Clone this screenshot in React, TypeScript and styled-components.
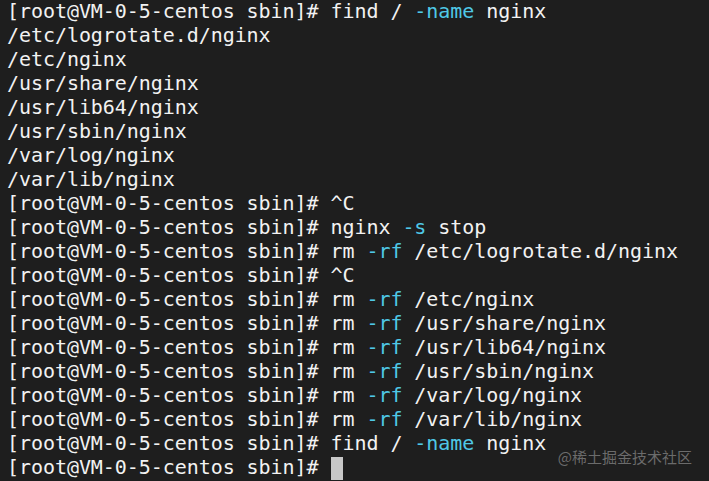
import React from "react";
import styled, { createGlobalStyle } from "styled-components";

const Global = createGlobalStyle`
  html, body { margin: 0; padding: 0; background: #1e1e1e; }
`;

const Terminal = styled.div`
  position: relative;
  width: 709px;
  height: 481px;
  overflow: hidden;
  background: #1e1e1e;
  color: #f2f2f2;
  font-family: "DejaVu Sans Mono", "Liberation Mono", monospace;
  font-size: 20px;
  letter-spacing: -0.06px;
  line-height: 24px;
  padding: 0 0 0 7px;
  box-sizing: border-box;
  white-space: pre;
`;

const Line = styled.div`
  height: 24px;
  display: flex;
  align-items: center;
  margin-top: -1px;
  margin-bottom: 1px;
`;

const Flag = styled.span`
  color: #4fc8e6;
`;

const Cursor = styled.span`
  display: inline-block;
  width: 12px;
  height: 23px;
  background: #c8c8c8;
  margin-top: 2px;
`;

const Watermark = styled.div`
  position: absolute;
  right: 17px;
  bottom: 14px;
  font-family: "Noto Sans CJK SC", "Noto Sans", sans-serif;
  font-size: 15px;
  line-height: 20px;
  letter-spacing: 0;
  color: rgba(160, 160, 160, 0.6);
  white-space: nowrap;
`;

const P = "[root@VM-0-5-centos sbin]# ";

type Seg = { t: string; flag?: boolean };
const lines: Seg[][] = [
  [{ t: P + "find / " }, { t: "-name", flag: true }, { t: " nginx" }],
  [{ t: "/etc/logrotate.d/nginx" }],
  [{ t: "/etc/nginx" }],
  [{ t: "/usr/share/nginx" }],
  [{ t: "/usr/lib64/nginx" }],
  [{ t: "/usr/sbin/nginx" }],
  [{ t: "/var/log/nginx" }],
  [{ t: "/var/lib/nginx" }],
  [{ t: P + "^C" }],
  [{ t: P + "nginx " }, { t: "-s", flag: true }, { t: " stop" }],
  [{ t: P + "rm " }, { t: "-rf", flag: true }, { t: " /etc/logrotate.d/nginx" }],
  [{ t: P + "^C" }],
  [{ t: P + "rm " }, { t: "-rf", flag: true }, { t: " /etc/nginx" }],
  [{ t: P + "rm " }, { t: "-rf", flag: true }, { t: " /usr/share/nginx" }],
  [{ t: P + "rm " }, { t: "-rf", flag: true }, { t: " /usr/lib64/nginx" }],
  [{ t: P + "rm " }, { t: "-rf", flag: true }, { t: " /usr/sbin/nginx" }],
  [{ t: P + "rm " }, { t: "-rf", flag: true }, { t: " /var/log/nginx" }],
  [{ t: P + "rm " }, { t: "-rf", flag: true }, { t: " /var/lib/nginx" }],
  [{ t: P + "find / " }, { t: "-name", flag: true }, { t: " nginx" }],
];

export default function App() {
  return (
    <>
      <Global />
      <Terminal>
        {lines.map((segs, i) => (
          <Line key={i}>
            {segs.map((s, j) =>
              s.flag ? <Flag key={j}>{s.t}</Flag> : <span key={j}>{s.t}</span>
            )}
          </Line>
        ))}
        <Line>
          <span>{P}</span>
          <Cursor />
        </Line>
        <Watermark>@稀土掘金技术社区</Watermark>
      </Terminal>
    </>
  );
}
